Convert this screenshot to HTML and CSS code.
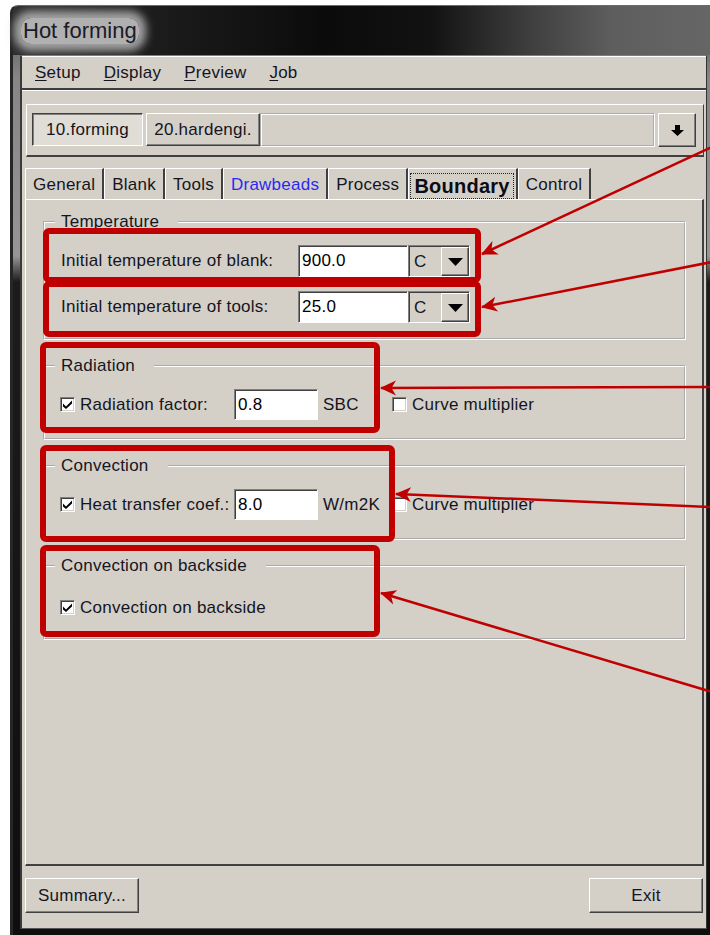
FILE: index.html
```html
<!DOCTYPE html>
<html lang="en">
<head>
<meta charset="utf-8">
<title>Hot forming</title>
<link rel="stylesheet" href="styles.css">
</head>
<body>
<div class="window">
  <div class="titlebar"><span class="title">Hot forming</span></div>
  <div class="client">
    <nav class="menubar">
      <span class="menu"><u>S</u>etup</span>
      <span class="menu"><u>D</u>isplay</span>
      <span class="menu"><u>P</u>review</span>
      <span class="menu"><u>J</u>ob</span>
    </nav>
    <div class="main">
      <div class="stagebar">
        <button class="btn stage stage-on">10.forming</button>
        <button class="btn stage stage-two">20.hardengi.</button>
        <div class="stage-rest"></div>
        <button class="btn stage-drop" aria-label="More stages">
          <svg width="13" height="11" viewBox="0 0 13 11"><path d="M4 0h5v5h4l-6.5 6L0 5h4z" fill="#000"/></svg>
        </button>
      </div>
      <div class="tabs">
        <span class="tab">General</span>
        <span class="tab">Blank</span>
        <span class="tab">Tools</span>
        <span class="tab tab-link">Drawbeads</span>
        <span class="tab">Process</span>
        <span class="tab tab-active"><span class="focus">Boundary</span></span>
        <span class="tab">Control</span>
      </div>
      <div class="panel">
        <fieldset class="group group-temp">
          <legend>Temperature</legend>
          <div class="temp-row">
            <label class="lbl">Initial temperature of blank:</label>
            <input class="field" type="text" value="900.0">
            <span class="combo"><span class="combo-val">C</span><span class="combo-btn"><svg width="15" height="8" viewBox="0 0 15 8"><path d="M0 0h15L7.5 8z" fill="#000"/></svg></span></span>
          </div>
          <div class="temp-row">
            <label class="lbl">Initial temperature of tools:</label>
            <input class="field" type="text" value="25.0">
            <span class="combo"><span class="combo-val">C</span><span class="combo-btn"><svg width="15" height="8" viewBox="0 0 15 8"><path d="M0 0h15L7.5 8z" fill="#000"/></svg></span></span>
          </div>
        </fieldset>

        <fieldset class="group">
          <legend>Radiation</legend>
          <div class="check-row">
            <span class="check-cell"><span class="cb"><svg width="9" height="9" viewBox="0 0 9 9"><path d="M0 3.5L3 6.5L9 0.5V3.5L3 9L0 6.5Z" fill="#000"/></svg></span>Radiation factor:</span>
            <input class="field" type="text" value="0.8">
            <span class="unit">SBC</span>
            <span class="check-cell"><span class="cb"></span>Curve multiplier</span>
          </div>
        </fieldset>

        <fieldset class="group">
          <legend>Convection</legend>
          <div class="check-row">
            <span class="check-cell"><span class="cb"><svg width="9" height="9" viewBox="0 0 9 9"><path d="M0 3.5L3 6.5L9 0.5V3.5L3 9L0 6.5Z" fill="#000"/></svg></span>Heat transfer coef.:</span>
            <input class="field" type="text" value="8.0">
            <span class="unit">W/m2K</span>
            <span class="check-cell"><span class="cb"></span>Curve multiplier</span>
          </div>
        </fieldset>

        <fieldset class="group group-back">
          <legend>Convection on backside</legend>
          <div class="check-row">
            <span class="check-cell check-wide"><span class="cb"><svg width="9" height="9" viewBox="0 0 9 9"><path d="M0 3.5L3 6.5L9 0.5V3.5L3 9L0 6.5Z" fill="#000"/></svg></span>Convection on backside</span>
          </div>
        </fieldset>
      </div>
      <div class="footer">
        <button class="btn wide">Summary...</button>
        <button class="btn wide">Exit</button>
      </div>
    </div>
  </div>
</div>

<svg class="annot" width="710" height="935" viewBox="0 0 710 935">
  <defs>
    <marker id="head" viewBox="0 0 16 16" refX="15" refY="8" markerWidth="16" markerHeight="16" markerUnits="userSpaceOnUse" orient="auto">
      <path d="M16 8L0 0.5L4.5 8L0 15.5Z" fill="#c00000"/>
    </marker>
  </defs>
  <g class="callouts">
    <rect x="46" y="231" width="432" height="49" rx="3"/>
    <rect x="46" y="284" width="432" height="50" rx="3"/>
    <rect x="43" y="345" width="334" height="85" rx="3"/>
    <rect x="43" y="448" width="349" height="91" rx="3"/>
    <rect x="43" y="548" width="334" height="86" rx="3"/>
  </g>
  <g class="pointers">
    <line x1="712" y1="147" x2="482" y2="254" marker-end="url(#head)"/>
    <line x1="712" y1="262" x2="482" y2="307" marker-end="url(#head)"/>
    <line x1="712" y1="387" x2="381" y2="388" marker-end="url(#head)"/>
    <line x1="712" y1="507" x2="396" y2="494" marker-end="url(#head)"/>
    <line x1="712" y1="692" x2="381" y2="593" marker-end="url(#head)"/>
  </g>
</svg>
</body>
</html>
```

FILE: styles.css
```css
* { box-sizing: border-box; }

html, body { margin: 0; }

body {
  position: relative;
  width: 710px;
  height: 935px;
  overflow: hidden;
  padding: 5px 0 0 10px;
  background: #fff;
  font-family: "Liberation Sans", Arial, sans-serif;
  font-size: 17px;
  letter-spacing: 0.25px;
  color: #15151f;
}

/* ---- window frame ---- */
.window {
  width: 700px;
  height: 930px;
  display: flex;
  flex-direction: column;
  padding: 0 3px 6px 7px;
  border-left: 3px solid #262626;
  border-top: 1px solid #6a6a6a;
  border-radius: 8px 0 0 0;
  background: linear-gradient(180deg, #4a4a4a 0, #858585 70px, #969696 250px, #1c1c1c 276px, #0e0e0e 100%);
}

.titlebar {
  height: 49px;
  margin: 0 -3px 0 -7px;
  padding-left: 8px;
  display: flex;
  align-items: center;
  border-radius: 6px 0 0 0;
  background: linear-gradient(90deg, #2e2e2e 0%, #1b1b1b 22%, #0b0b0b 45%, #121212 60%, #3e3e3e 74%, #5e5e5e 86%, #666 100%);
}

.title {
  font-size: 22px;
  letter-spacing: 0;
  line-height: 26px;
  padding: 0 2px;
  color: #1b1b26;
  border-radius: 10px;
  background: rgba(192, 192, 192, 0.9);
  box-shadow: 0 0 9px 7px rgba(190, 190, 190, 0.82);
}

.client {
  flex: 1;
  display: flex;
  flex-direction: column;
  background: #d4d0c8;
  border-top: 1px solid #7e7e7e;
  border-left: 2px solid #3a3a3a;
  border-right: 1px solid #333;
  border-bottom: 1px solid #555;
}

/* ---- menu ---- */
.menubar {
  height: 34px;
  display: flex;
  align-items: center;
  gap: 23px;
  padding-left: 13px;
  border-top: 1px solid #fff;
  border-bottom: 2px solid #3c3c3c;
}

.menu u {
  text-decoration-thickness: 1px;
  text-underline-offset: 2px;
}

.main {
  flex: 1;
  display: flex;
  flex-direction: column;
  border-top: 1px solid #fff;
  padding: 13px 2px 0 3px;
}

/* ---- common controls ---- */
.btn {
  font: inherit;
  letter-spacing: inherit;
  color: inherit;
  padding: 0;
  background: #d4d0c8;
  border: 1px solid;
  border-color: #fff #404040 #404040 #fff;
  box-shadow: inset -1px -1px #808080;
}

.field {
  font: inherit;
  letter-spacing: inherit;
  color: #000;
  width: 100%;
  height: 100%;
  padding: 0 0 0 3px;
  margin: 0;
  background: #fff;
  border: 1px solid;
  border-color: #808080 #fff #fff #808080;
  box-shadow: inset 1px 1px #404040;
  outline: none;
}

/* ---- stage selector ---- */
.stagebar {
  height: 53px;
  margin-left: 1px;
  display: flex;
  align-items: flex-start;
  padding: 8px 7px 0 5px;
  border-top: 1px solid #fff;
  border-left: 1px solid #fff;
  border-right: 1px solid #404040;
  border-bottom: 2px solid #404040;
}

.stage { height: 33px; }

.stage-on {
  width: 111px;
  margin-right: 3px;
  background: #e0ddd6;
  border-color: #404040 #fff #fff #404040;
  box-shadow: inset 1px 1px #808080;
}

.stage-two { width: 114px; }

.stage-rest {
  flex: 1;
  height: 34px;
  margin-right: 3px;
  border: 2px groove #fff;
}

.stage-drop {
  width: 38px;
  height: 34px;
  display: flex;
  align-items: center;
  justify-content: center;
}

/* ---- tabs ---- */
.tabs {
  height: 31px;
  margin-top: 11px;
  display: flex;
}

.tab {
  display: flex;
  align-items: center;
  padding: 2px 7px 0;
  border-top: 1px solid #fff;
  border-left: 1px solid #fff;
  border-right: 2px solid #404040;
}

.tab-link { color: #2a2af0; }

.tab-active {
  padding: 0 2px 0 1px;
  font-size: 20px;
  font-weight: bold;
  color: #0c0c14;
}

.focus {
  height: 26px;
  margin-top: 3px;
  padding: 2px 3px 0;
  display: flex;
  align-items: center;
  border: 1px dotted #222;
}

.panel {
  height: 667px;
  padding: 13px 16px 0 17px;
  border-top: 1px solid #fff;
  border-left: 1px solid #fff;
  border-right: 2px solid #404040;
  border-bottom: 2px solid #404040;
}

/* ---- group boxes ---- */
.group {
  margin: 0 0 17px;
  min-width: 0;
  padding: 14px 10px 18px 16px;
  border: 2px groove #fff;
}

.group-temp { padding-bottom: 15px; }

.group-back { padding-top: 17px; padding-bottom: 15px; }

.group legend {
  margin-left: -6px;
  padding: 0 19px 0 6px;
  line-height: 18px;
}

.temp-row {
  display: grid;
  grid-template-columns: 237px 110px 62px;
  align-items: center;
  height: 32px;
}

.temp-row + .temp-row { margin-top: 14px; }

.combo {
  height: 32px;
  display: flex;
  padding: 1px 0 0 1px;
  border: 1px solid;
  border-color: #808080 #fff #fff #808080;
  box-shadow: inset 1px 1px #404040;
}

.combo-val {
  flex: 1;
  display: flex;
  align-items: center;
  padding-left: 4px;
}

.combo-btn {
  width: 28px;
  display: flex;
  align-items: center;
  justify-content: center;
  border: 1px solid;
  border-color: #fff #404040 #404040 #fff;
  box-shadow: inset -1px -1px #808080;
}

.check-row {
  display: grid;
  grid-template-columns: 173px 84px 75px auto;
  align-items: center;
  height: 31px;
}

.check-cell {
  display: flex;
  align-items: center;
  margin-left: -1px;
  white-space: nowrap;
}

.check-wide { grid-column: 1 / -1; }

.unit { padding-left: 5px; }

.cb {
  width: 15px;
  height: 15px;
  margin-right: 5px;
  display: inline-flex;
  align-items: center;
  justify-content: center;
  background: #fff;
  border: 1px solid;
  border-color: #808080 #fff #fff #808080;
  box-shadow: inset 1px 1px #404040, inset -1px -1px #d4d0c8;
}

/* ---- footer ---- */
.footer {
  flex: 1;
  display: flex;
  justify-content: space-between;
  align-items: flex-start;
  padding: 12px 1px 0 0;
}

.wide {
  width: 114px;
  height: 35px;
}

/* ---- callout overlay ---- */
.annot {
  position: absolute;
  left: 0;
  top: 0;
  pointer-events: none;
}

.callouts rect {
  fill: none;
  stroke: #c00000;
  stroke-width: 6;
}

.pointers line {
  stroke: #c00000;
  stroke-width: 2.5;
}
```
